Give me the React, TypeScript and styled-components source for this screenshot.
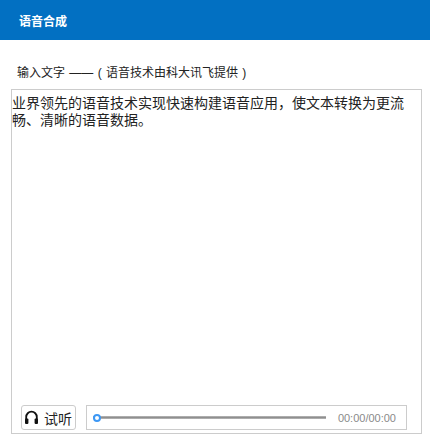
import React from "react";
import styled, { createGlobalStyle } from "styled-components";

const Global = createGlobalStyle`
  html, body { margin: 0; padding: 0; background: #fff; }
  body { font-family: "Liberation Sans", "Noto Sans CJK SC", sans-serif; }
`;

const Page = styled.div`
  width: 430px;
  height: 442px;
  display: flex;
  flex-direction: column;
  overflow: hidden;
`;

const Header = styled.header`
  height: 40px;
  flex: none;
  background: #0270c2;
  display: flex;
  align-items: center;
  padding-left: 19px;
  color: #fff;
  font-size: 12px;
  font-weight: 700;
`;

const Label = styled.div`
  height: 49px;
  flex: none;
  box-sizing: border-box;
  padding: 25px 0 0 17px;
  font-size: 12px;
  line-height: 16px;
  word-spacing: 1px;
  color: #222;
`;

const Panel = styled.section`
  width: 411px;
  height: 345px;
  margin-left: 11px;
  box-sizing: border-box;
  border: 1px solid #ccc;
  display: flex;
  flex-direction: column;
`;

const Content = styled.div`
  flex: 1;
  padding: 5px 14px 0 0;
  font-size: 14px;
  line-height: 17px;
  color: #222;
`;

const Controls = styled.div`
  display: flex;
  gap: 10px;
  padding: 0 14px 3px 9px;
`;

const ListenButton = styled.button`
  width: 55px;
  height: 25px;
  box-sizing: border-box;
  border: 1px solid #ccc;
  border-radius: 3px;
  background: #fff;
  padding: 0 0 0 2px;
  display: flex;
  align-items: center;
  gap: 5px;
  font-family: inherit;
  font-size: 14px;
  color: #222;
`;

const Player = styled.div`
  flex: 1;
  height: 25px;
  box-sizing: border-box;
  border: 1px solid #ccc;
  display: flex;
  align-items: center;
  padding: 0 10px 0 6px;
`;

const Track = styled.div`
  width: 233px;
  height: 3px;
  background: linear-gradient(#bbb, #8f8f8f 50%, #bbb);
  position: relative;
  flex: none;
`;

const Thumb = styled.span`
  position: absolute;
  left: 0;
  top: -2.5px;
  width: 8px;
  height: 8px;
  box-sizing: border-box;
  border: 2px solid #3d98f5;
  border-radius: 50%;
  background: #fff;
`;

const Time = styled.span`
  margin-left: auto;
  font-size: 11px;
  color: #8a8a8a;
`;

export default function App() {
  return (
    <Page>
      <Global />
      <Header>语音合成</Header>
      <Label>输入文字 —— ( 语音技术由科大讯飞提供 )</Label>
      <Panel>
        <Content>业界领先的语音技术实现快速构建语音应用，使文本转换为更流畅、清晰的语音数据。</Content>
        <Controls>
          <ListenButton>
            <svg width="15" height="15" viewBox="0 0 15 15" aria-hidden="true">
              <path d="M2.2 10V7a5.3 5.3 0 0 1 10.6 0V10" fill="none" stroke="#111" strokeWidth="1.8" />
              <rect x="1" y="8.5" width="3.4" height="5.5" rx="1" fill="#111" />
              <rect x="10.6" y="8.5" width="3.4" height="5.5" rx="1" fill="#111" />
            </svg>
            试听
          </ListenButton>
          <Player>
            <Track>
              <Thumb />
            </Track>
            <Time>00:00/00:00</Time>
          </Player>
        </Controls>
      </Panel>
    </Page>
  );
}
